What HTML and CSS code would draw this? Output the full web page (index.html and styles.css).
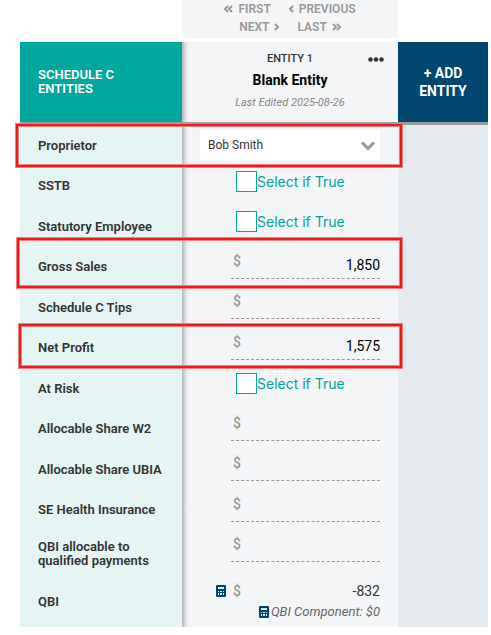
FILE: index.html
```html
<!DOCTYPE html>
<html lang="en">
<head>
    <meta charset="UTF-8">
    <meta name="viewport" content="width=device-width, initial-scale=1.0">
    <title>Schedule C Entities</title>
    <link rel="stylesheet" href="styles.css">
</head>
<body>
    <main class="page">
        <nav class="pager">
            <div class="pager-line">
                <button type="button"><svg width="9" height="8" viewBox="0 0 9 8"><path d="M4 1L1 4l3 3M8 1L5 4l3 3"/></svg>FIRST</button>
                <button type="button"><svg width="5" height="8" viewBox="0 0 5 8"><path d="M4 1L1 4l3 3"/></svg>PREVIOUS</button>
            </div>
            <div class="pager-line">
                <button type="button">NEXT<svg width="5" height="8" viewBox="0 0 5 8"><path d="M1 1l3 3-3 3"/></svg></button>
                <button type="button">LAST<svg width="9" height="8" viewBox="0 0 9 8"><path d="M1 1l3 3-3 3M5 1l3 3-3 3"/></svg></button>
            </div>
        </nav>

        <header class="row header">
            <h1 class="heading">SCHEDULE C ENTITIES</h1>
            <div class="cell entity">
                <span class="entity-number">ENTITY 1</span>
                <h2 class="entity-name">Blank Entity</h2>
                <span class="entity-edited">Last Edited 2025-08-26</span>
                <button type="button" class="more" aria-label="More">
                    <svg width="16" height="5" viewBox="0 0 16 5"><circle cx="2.5" cy="2.5" r="2.3"/><circle cx="8" cy="2.5" r="2.3"/><circle cx="13.5" cy="2.5" r="2.3"/></svg>
                </button>
            </div>
            <button type="button" class="add">+ ADD<br>ENTITY</button>
        </header>

        <form class="rows">
            <div class="row marked marked-first">
                <label class="label" for="proprietor">Proprietor</label>
                <div class="cell">
                    <div class="picker">
                        <select id="proprietor">
                            <option>Bob Smith</option>
                        </select>
                        <svg width="14" height="10" viewBox="0 0 14 10"><path d="M1 1.5l6 6 6-6"/></svg>
                    </div>
                </div>
            </div>
            <div class="row">
                <label class="label" for="sstb">SSTB</label>
                <div class="cell">
                    <label class="check"><input type="checkbox" id="sstb">Select if True</label>
                </div>
            </div>
            <div class="row">
                <label class="label" for="statutory">Statutory Employee</label>
                <div class="cell">
                    <label class="check"><input type="checkbox" id="statutory">Select if True</label>
                </div>
            </div>
            <div class="row marked">
                <label class="label" for="sales">Gross Sales</label>
                <div class="cell">
                    <div class="money"><span>$</span><input type="text" id="sales" value="1,850"></div>
                </div>
            </div>
            <div class="row">
                <label class="label" for="tips">Schedule C Tips</label>
                <div class="cell">
                    <div class="money"><span>$</span><input type="text" id="tips"></div>
                </div>
            </div>
            <div class="row marked marked-profit">
                <label class="label" for="profit">Net Profit</label>
                <div class="cell">
                    <div class="money"><span>$</span><input type="text" id="profit" value="1,575"></div>
                </div>
            </div>
            <div class="row">
                <label class="label" for="risk">At Risk</label>
                <div class="cell">
                    <label class="check"><input type="checkbox" id="risk">Select if True</label>
                </div>
            </div>
            <div class="row">
                <label class="label" for="w2">Allocable Share W2</label>
                <div class="cell">
                    <div class="money"><span>$</span><input type="text" id="w2"></div>
                </div>
            </div>
            <div class="row">
                <label class="label" for="ubia">Allocable Share UBIA</label>
                <div class="cell">
                    <div class="money"><span>$</span><input type="text" id="ubia"></div>
                </div>
            </div>
            <div class="row">
                <label class="label" for="insurance">SE Health Insurance</label>
                <div class="cell">
                    <div class="money"><span>$</span><input type="text" id="insurance"></div>
                </div>
            </div>
            <div class="row tall">
                <label class="label" for="payments">QBI allocable to qualified payments</label>
                <div class="cell">
                    <div class="money"><span>$</span><input type="text" id="payments"></div>
                </div>
            </div>
            <div class="row total">
                <label class="label" for="qbi">QBI</label>
                <div class="cell">
                    <div class="result">
                        <svg class="calc" width="10" height="12" viewBox="0 0 10 12"><rect width="10" height="12" rx="1"/><path d="M2 2h6v2H2zM2 6h1v1H2zM4 6h2v1H4zM7 6h1v1H7zM2 8h1v2H2zM4 8h2v2H4zM7 8h1v2H7z"/></svg>
                        <span class="sign">$</span>
                        <output id="qbi">-832</output>
                    </div>
                    <div class="note">
                        <svg class="calc" width="10" height="12" viewBox="0 0 10 12"><rect width="10" height="12" rx="1"/><path d="M2 2h6v2H2zM2 6h1v1H2zM4 6h2v1H4zM7 6h1v1H7zM2 8h1v2H2zM4 8h2v2H4zM7 8h1v2H7z"/></svg>
                        QBI Component: $0
                    </div>
                </div>
            </div>
        </form>
    </main>
</body>
</html>
```
FILE: styles.css
```css
* {
    box-sizing: border-box;
}

body {
    margin: 0;
    background: #fff;
    color: #333;
    font-family: Roboto, "Liberation Sans", sans-serif;
    font-size: 13px;
}

button,
input,
select {
    margin: 0;
    padding: 0;
    border: none;
    background: none;
    font-family: inherit;
}

button {
    cursor: pointer;
}

.page {
    padding: 0 3px 8px 20px;
}

/* pager */
.pager {
    margin: 0 90px 4px 162px;
    padding-bottom: 2px;
    background: #f3f5f7;
}

.pager-line {
    display: flex;
    justify-content: center;
    gap: 18px;
}

.pager button {
    display: flex;
    align-items: center;
    gap: 5px;
    color: #999;
    font-size: 12px;
    font-weight: 600;
    line-height: 18px;
}

.pager svg {
    fill: none;
    stroke: #999;
    stroke-width: 2;
}

/* grid */
.row {
    position: relative;
    display: grid;
    grid-template-columns: 162px minmax(0, 1fr) 90px;
    height: 40px;
}

.row:nth-child(odd) {
    height: 41px;
}

.rows {
    border-top: 3px solid #999;
    background: #e4eaee;
}

.rows .tall {
    height: 47px;
}

.rows .total {
    height: 50px;
}

.cell {
    position: relative;
    padding: 5px 18px 0;
    background: linear-gradient(to right, #b5b6b7, #e4e5e7 4px, #f3f5f7 7px);
}

.label {
    display: flex;
    align-items: center;
    padding: 0 10px 0 18px;
    background: #e5f5f4;
    font-weight: 600;
    line-height: 14px;
}

/* header */
.row.header {
    height: 80px;
}

.heading {
    display: flex;
    align-items: center;
    margin: 0;
    padding: 0 60px 0 18px;
    background: #00a89d;
    color: #fff;
    font-size: 13px;
    font-weight: 600;
    line-height: 14px;
}

.entity {
    display: flex;
    flex-direction: column;
    align-items: center;
    padding-top: 7px;
}

.entity-number {
    font-size: 11px;
    font-weight: 500;
    line-height: 20px;
}

.entity-name {
    margin: 0;
    color: #000;
    font-size: 14px;
    font-weight: 700;
    line-height: 22px;
}

.entity-edited {
    color: #888;
    font-size: 11px;
    font-style: italic;
    line-height: 24px;
}

.more {
    position: absolute;
    top: 15px;
    right: 14px;
    display: flex;
}

.more svg {
    fill: #333;
}

.add {
    background: #00466e;
    color: #fff;
    font-size: 14px;
    font-weight: 700;
    line-height: 18px;
}

/* fields */
.picker {
    position: relative;
}

.picker select {
    width: 100%;
    height: 30px;
    padding: 0 8px;
    appearance: none;
    background: #fff;
    color: #333;
    font-size: 12px;
}

.picker svg {
    position: absolute;
    top: 11px;
    right: 5px;
    fill: none;
    stroke: #999;
    stroke-width: 3;
    pointer-events: none;
}

.check {
    display: flex;
    align-items: center;
    height: 21px;
    margin-left: 36px;
    color: #00a59b;
    font-family: Inter, sans-serif;
    font-size: 14px;
    white-space: nowrap;
}

.check input {
    width: 21px;
    height: 21px;
    appearance: none;
    border: 1px solid #00a59b;
    background: #fff;
}

.money {
    display: flex;
    height: 27px;
    margin-left: 31px;
    padding-left: 2px;
    border-bottom: 1px dashed #999;
}

.money span,
.sign {
    color: #999;
    font-size: 14px;
    font-weight: 500;
    line-height: 18px;
}

.money input {
    flex: 1;
    min-width: 0;
    height: 26px;
    color: #000;
    font-size: 14px;
    text-align: right;
}

.result {
    display: flex;
    align-items: center;
    gap: 7px;
    padding-left: 16px;
}

.result output {
    flex: 1;
    font-size: 14px;
    line-height: 18px;
    text-align: right;
}

.note {
    display: flex;
    align-items: center;
    justify-content: flex-end;
    gap: 2px;
    color: #666;
    font-size: 13px;
    font-style: italic;
    line-height: 24px;
    white-space: nowrap;
}

.calc {
    fill: #00466e;
}

.calc path {
    fill: #dfe9ee;
}

/* red frames */
.marked::after {
    content: "";
    position: absolute;
    top: -9px;
    right: 86px;
    bottom: -1px;
    left: -3px;
    z-index: 1;
    border: 2px solid #e81c1f;
    box-shadow: 0 0 0 1px #ee8081, inset 0 0 0 1px #ee8081;
    pointer-events: none;
}

.marked-first::after {
    top: -1px;
    left: -4px;
}

.marked-profit::after {
    top: -4px;
    bottom: 0;
    left: -1px;
}
```
